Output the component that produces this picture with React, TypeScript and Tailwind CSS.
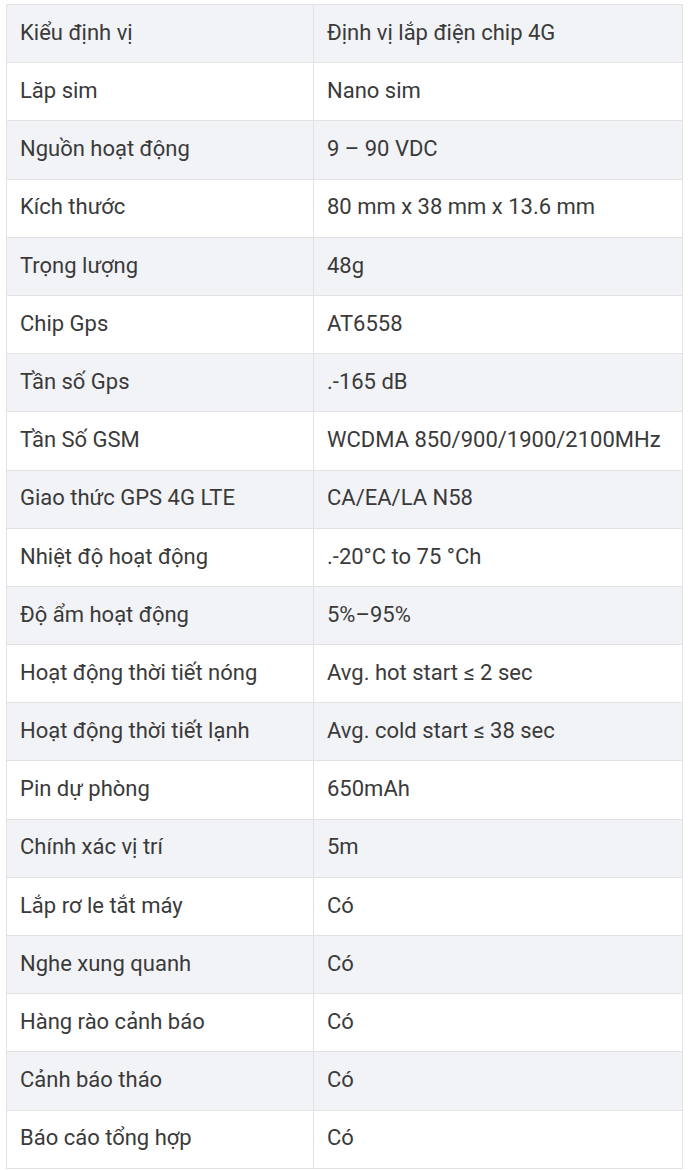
const specs: [string, string][] = [
  ['Kiểu định vị', 'Định vị lắp điện chip 4G'],
  ['Lăp sim', 'Nano sim'],
  ['Nguồn hoạt động', '9 – 90 VDC'],
  ['Kích thước', '80 mm x 38 mm x 13.6 mm'],
  ['Trọng lượng', '48g'],
  ['Chip Gps', 'AT6558'],
  ['Tần số Gps', '.-165 dB'],
  ['Tần Số GSM', 'WCDMA 850/900/1900/2100MHz'],
  ['Giao thức GPS 4G LTE', 'CA/EA/LA N58'],
  ['Nhiệt độ hoạt động', '.-20°C to 75 °Ch'],
  ['Độ ẩm hoạt động', '5%–95%'],
  ['Hoạt động thời tiết nóng', 'Avg. hot start ≤ 2 sec'],
  ['Hoạt động thời tiết lạnh', 'Avg. cold start ≤ 38 sec'],
  ['Pin dự phòng', '650mAh'],
  ['Chính xác vị trí', '5m'],
  ['Lắp rơ le tắt máy', 'Có'],
  ['Nghe xung quanh', 'Có'],
  ['Hàng rào cảnh báo', 'Có'],
  ['Cảnh báo tháo', 'Có'],
  ['Báo cáo tổng hợp', 'Có'],
];

export default function App() {
  return (
    <div className="bg-white min-h-screen pt-[4px] pl-[6px]" style={{ fontFamily: 'Roboto, "Noto Sans", sans-serif' }}>
      <table className="w-[677px] border-collapse text-[22px] leading-tight text-[#3a3a3a]">
        <tbody>
          {specs.map(([label, value], i) => (
            <tr key={label} className={i % 2 === 0 ? 'bg-[#f2f3f7]' : 'bg-white'}>
              <td className="w-[307px] h-[58.2px] border border-[#e2e2e2] pl-[13px] pb-[2px] align-middle">{label}</td>
              <td className="h-[58.2px] border border-[#e2e2e2] pl-[13px] pb-[2px] align-middle">{value}</td>
            </tr>
          ))}
        </tbody>
      </table>
    </div>
  );
}
